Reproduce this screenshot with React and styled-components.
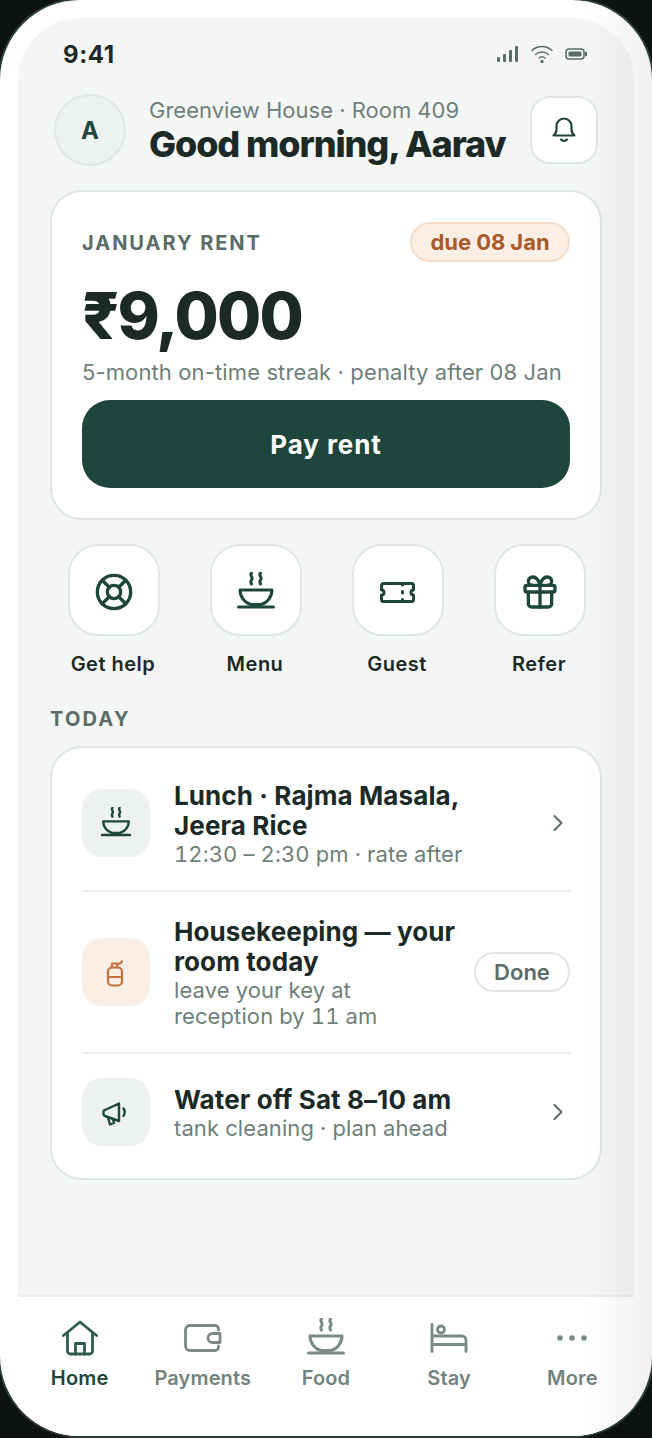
import styled, { createGlobalStyle } from "styled-components";
import { LifeBuoy, Gift, ChevronRight } from "lucide-react";

const Global = createGlobalStyle`
  html, body {
    margin: 0;
    padding: 0;
    background: #0c1311;
  }
  * {
    box-sizing: border-box;
  }
`;

const Page = styled.div`
  width: 652px;
  height: 1438px;
  background: #0c1311;
  font-family: "Inter", sans-serif;
  color: #1b2a26;
  overflow: hidden;
`;

const Phone = styled.div`
  position: relative;
  width: 652px;
  height: 1436px;
  padding: 18px 18px 0;
  background: #fff;
  border-radius: 80px;
  box-shadow: 0 0 0 2px #2a3d37;
  overflow: hidden;
  &::after {
    content: "";
    position: absolute;
    inset: 0;
    pointer-events: none;
    background: linear-gradient(to right, rgba(0, 0, 0, 0) 90%, rgba(0, 0, 0, 0.06) 100%);
  }
`;

const Screen = styled.div`
  height: 100%;
  display: flex;
  flex-direction: column;
  background: #f4f6f5;
  border-radius: 62px 62px 0 0;
  overflow: hidden;
`;

const Main = styled.main`
  flex: 1;
`;

const StatusBar = styled.div`
  display: flex;
  align-items: center;
  justify-content: space-between;
  height: 30px;
  margin-top: 21px;
  padding: 0 47px 0 45px;
  font-size: 24px;
  font-weight: 700;
  letter-spacing: 0.6px;
`;

const StatusIcons = styled.div`
  display: flex;
  align-items: center;
  gap: 12px;
  color: #5a6d67;
`;

const Header = styled.header`
  display: flex;
  align-items: center;
  margin-top: 25px;
  padding: 0 36px;
`;

const Avatar = styled.div`
  flex: none;
  width: 72px;
  height: 72px;
  display: flex;
  align-items: center;
  justify-content: center;
  border-radius: 50%;
  background: #edf1ef;
  border: 2px solid #dfe7e4;
  color: #1f463c;
  font-size: 24px;
  font-weight: 700;
`;

const Hello = styled.div`
  flex: 1;
  margin-left: 23px;
`;

const Place = styled.div`
  font-size: 22px;
  line-height: 28px;
  color: #6f7f7a;
`;

const Greeting = styled.h1`
  margin: 0;
  font-size: 36px;
  line-height: 40px;
  font-weight: 800;
  letter-spacing: -1.1px;
  white-space: nowrap;
`;

const BellButton = styled.div`
  flex: none;
  width: 68px;
  height: 68px;
  display: flex;
  align-items: center;
  justify-content: center;
  background: #fff;
  border: 2px solid #dfe7e4;
  border-radius: 20px;
  color: #1f463c;
`;

const Card = styled.section`
  margin: 0 32px;
  background: #fff;
  border: 2px solid #dfe7e4;
  border-radius: 32px;
`;

const RentCard = styled(Card)`
  margin-top: 24px;
  height: 330px;
  padding: 30px 30px 0;
`;

const RentTop = styled.div`
  display: flex;
  align-items: center;
  justify-content: space-between;
`;

const Eyebrow = styled.div`
  padding-top: 2px;
  font-size: 20px;
  font-weight: 700;
  letter-spacing: 1.95px;
  color: #5a6d67;
`;

const DueBadge = styled.div`
  width: 160px;
  height: 40px;
  display: flex;
  align-items: center;
  justify-content: center;
  background: #fbeee5;
  border: 2px solid #f3dcc9;
  border-radius: 20px;
  color: #a85a2a;
  font-size: 22px;
  font-weight: 700;
  letter-spacing: -0.05px;
`;

const Amount = styled.div`
  margin-top: 18px;
  font-size: 64px;
  line-height: 72px;
  font-weight: 800;
  letter-spacing: -1.9px;
`;

const RentNote = styled.div`
  margin-top: 6px;
  font-size: 22px;
  line-height: 28px;
  letter-spacing: 0.12px;
  color: #6f7f7a;
  white-space: nowrap;
`;

const PayButton = styled.div`
  margin-top: 14px;
  height: 88px;
  display: flex;
  align-items: center;
  justify-content: center;
  background: #1f463c;
  border-radius: 28px;
  color: #fff;
  font-size: 26px;
  font-weight: 700;
  letter-spacing: 0.9px;
`;

const Actions = styled.div`
  display: grid;
  grid-template-columns: repeat(4, 142px);
  margin-top: 24px;
  padding: 0 24px;
`;

const Action = styled.div`
  display: flex;
  flex-direction: column;
  align-items: center;
  gap: 16px;
`;

const ActionTile = styled.div`
  width: 92px;
  height: 92px;
  margin-left: 2px;
  padding-top: 4px;
  display: flex;
  align-items: center;
  justify-content: center;
  background: #fff;
  border: 2px solid #dfe7e4;
  border-radius: 30px;
  color: #1f463c;
`;

const ActionLabel = styled.div`
  font-size: 20px;
  line-height: 24px;
  font-weight: 600;
  letter-spacing: 0.5px;
`;

const SectionTitle = styled(Eyebrow)`
  margin: 29px 32px 15px;
  line-height: 24px;
  letter-spacing: 2.2px;
`;

const ListCard = styled(Card)`
  padding: 8px 30px;
`;

const Row = styled.div`
  display: flex;
  align-items: center;
  gap: 16px;
  padding: 24px 0;
  & + & {
    border-top: 2px solid #e9edeb;
  }
`;

const RowIcon = styled.div`
  flex: none;
  width: 68px;
  height: 68px;
  margin-right: 8px;
  display: flex;
  align-items: center;
  justify-content: center;
  border-radius: 20px;
  background: ${(props) => (props.$warm ? "#fbeee5" : "#edf1ef")};
  color: ${(props) => (props.$warm ? "#c5713c" : "#1f463c")};
`;

const RowText = styled.div`
  flex: 1;
  min-width: 0;
  transform: translateY(1px);
`;

const RowTitle = styled.div`
  font-size: 26px;
  line-height: 30px;
  font-weight: 700;
  letter-spacing: 0.1px;
`;

const RowSub = styled.div`
  font-size: 22px;
  line-height: 26px;
  letter-spacing: 0.1px;
  font-variant-numeric: tabular-nums;
  color: #6f7f7a;
`;

const Chevron = styled.div`
  flex: none;
  display: flex;
  margin-right: -2px;
  color: #5a6d67;
`;

const DoneButton = styled.div`
  flex: none;
  width: 96px;
  height: 40px;
  display: flex;
  align-items: center;
  justify-content: center;
  background: #fff;
  border: 2px solid #dfe7e4;
  border-radius: 20px;
  color: #5a6d67;
  font-size: 22px;
  font-weight: 600;
`;

const Nav = styled.nav`
  flex: none;
  height: 141px;
  padding-top: 21px;
  display: grid;
  grid-template-columns: repeat(5, 1fr);
  background: #fff;
  border-top: 2px solid #e9edeb;
`;

const NavItem = styled.div`
  display: flex;
  flex-direction: column;
  align-items: center;
  color: ${(props) => (props.$active ? "#1f463c" : "#72837e")};
`;

const NavIcon = styled.div`
  height: 40px;
  display: flex;
  align-items: center;
  justify-content: center;
  color: ${(props) => (props.$active ? "#2f5a4e" : "#7a8a85")};
`;

const NavLabel = styled.div`
  margin-top: 8px;
  font-size: 20px;
  line-height: 24px;
  font-weight: 600;
  letter-spacing: 0.15px;
`;

const SignalIcon = () => (
  <svg width="22" height="16" viewBox="0 0 22 16" fill="currentColor">
    <rect x="0" y="11" width="3" height="5" rx="1.2" />
    <rect x="6" y="8" width="3" height="8" rx="1" />
    <rect x="12" y="4" width="3" height="12" rx="1" />
    <rect x="18" y="0" width="3" height="16" rx="1" />
  </svg>
);

const WifiIcon = () => (
  <svg width="22" height="18" viewBox="0 0 22 18" fill="none" stroke="currentColor" strokeWidth="1.4" strokeLinecap="round">
    <path d="M1 5.500a14.500 14.500 0 0 1 20 0" />
    <path d="M4.500 9.500a9.500 9.500 0 0 1 13 0" />
    <path d="M8 13a4.500 4.500 0 0 1 6 0" />
    <circle cx="11" cy="16.400" r="1" fill="currentColor" />
  </svg>
);

const BatteryIcon = () => (
  <svg width="22" height="12" viewBox="0 0 22 12" fill="none">
    <rect x="1" y="1" width="18" height="10" rx="3" stroke="currentColor" strokeWidth="1.600" />
    <rect x="3.500" y="3.500" width="13" height="5" rx="1" fill="currentColor" />
    <path d="M20.500 4v4a2 2 0 0 0 0-4Z" fill="currentColor" stroke="currentColor" />
  </svg>
);

const BellIcon = () => (
  <svg width="24" height="26" viewBox="0 0 24 26" fill="none" stroke="currentColor" strokeWidth="2.200" strokeLinecap="round" strokeLinejoin="round">
    <path d="M1.500 18.500h21c-2-1.600-3-3-3-6V9a7.500 7.500 0 0 0-15 0v3.500c0 3-1 4.400-3 6Z" />
    <path d="M9 22.500c1.600 1.800 4.400 1.800 6 0" />
  </svg>
);

const BowlIcon = ({ size = 40, width = 3 }) => (
  <svg width={size} height={size} viewBox="0 2 40 40" fill="none" stroke="currentColor" strokeWidth={width} strokeLinecap="round" strokeLinejoin="round">
    <path d="M15.500 3c-2.400 2.400 2.400 4.400 0 7-1 1.200-1 2 0 4" />
    <path d="M24.500 3c-2.400 2.400 2.400 4.400 0 7-1 1.200-1 2 0 4" />
    <path d="M4 20h32c0 7-5 13-11 14.500H15C9 33 4 27 4 20Z" />
    <path d="M2.500 37h35" />
  </svg>
);

const TicketIcon = () => (
  <svg width="40" height="40" viewBox="0 0 40 40" fill="none" stroke="currentColor" strokeWidth="3" strokeLinecap="round" strokeLinejoin="round">
    <path d="M3.500 13.500a2 2 0 0 1 2-2h28a2 2 0 0 1 2 2v4.500a2.500 2.500 0 0 0 0 5v4.500a2 2 0 0 1-2 2h-28a2 2 0 0 1-2-2V23a2.500 2.500 0 0 0 0-5Z" />
    <path d="M24.500 12v1M24.500 19.500v1.500M24.500 27.500v1" />
  </svg>
);

const SprayIcon = () => (
  <svg width="30" height="30" viewBox="0 0 30 30" fill="none" stroke="currentColor" strokeWidth="2.200" strokeLinecap="round" strokeLinejoin="round">
    <rect x="7" y="10.500" width="14" height="18" rx="4" />
    <path d="M7 20h14" />
    <path d="M11 10.500V6.500h5v4" />
    <path d="M16 7c2.500 0 4-.5 5-2.500" />
  </svg>
);

const MegaphoneIcon = () => (
  <svg width="28" height="28" viewBox="0 0 28 28" fill="none" stroke="currentColor" strokeWidth="2.400" strokeLinecap="round" strokeLinejoin="round">
    <path d="M17 5.500 3 12a2 2 0 0 0-1.500 2v2A2 2 0 0 0 3 18l14 5Z" />
    <path d="M6 19.500l2 7 4-1.500-1-3.500" />
    <path d="M21.500 10.500c1.500 2 1.500 5 0 7.500" />
  </svg>
);

const HomeIcon = () => (
  <svg width="36" height="36" viewBox="0 0 36 36" fill="none" stroke="currentColor" strokeWidth="2.800" strokeLinecap="round" strokeLinejoin="round">
    <path d="M1.500 15.500 18 2l16.500 13.500" />
    <path d="M5.500 13v18a3 3 0 0 0 3 3h19a3 3 0 0 0 3-3V13" />
    <path d="M13.500 34V23.500h9V34" />
  </svg>
);

const WalletIcon = () => (
  <svg width="38" height="28" viewBox="0 0 38 28" fill="none" stroke="currentColor" strokeWidth="2.800" strokeLinecap="round" strokeLinejoin="round">
    <path d="M34.500 6V5a3.500 3.500 0 0 0-3.500-3.500H6A4.500 4.500 0 0 0 1.500 6v16A4.500 4.500 0 0 0 6 26.500h25a3.500 3.500 0 0 0 3.500-3.500v-1" />
    <path d="M36 9.500h-7.500a4.500 4.500 0 0 0 0 9H36Z" />
  </svg>
);

const BedIcon = () => (
  <svg width="38" height="30" viewBox="0 0 38 30" fill="none" stroke="currentColor" strokeWidth="2.800" strokeLinecap="round" strokeLinejoin="round">
    <path d="M2 1.500V28.500" />
    <path d="M2 21.500h34" />
    <path d="M2 13h30a4 4 0 0 1 4 4v11.500" />
    <circle cx="11" cy="6.500" r="3.500" />
  </svg>
);

const DotsIcon = () => (
  <svg width="32" height="8" viewBox="0 0 32 8" fill="currentColor">
    <circle cx="4" cy="4" r="2.800" />
    <circle cx="16" cy="4" r="2.800" />
    <circle cx="28" cy="4" r="2.800" />
  </svg>
);

const actions = [
  { label: "Get help", icon: <LifeBuoy size={40} strokeWidth={2} /> },
  { label: "Menu", icon: <BowlIcon /> },
  { label: "Guest", icon: <TicketIcon /> },
  { label: "Refer", icon: <Gift size={40} strokeWidth={2} /> },
];

const navItems = [
  { label: "Home", icon: <HomeIcon />, active: true },
  { label: "Payments", icon: <WalletIcon /> },
  { label: "Food", icon: <BowlIcon /> },
  { label: "Stay", icon: <BedIcon /> },
  { label: "More", icon: <DotsIcon /> },
];

const App = () => {
  return (
    <Page>
      <Global />
      <Phone>
        <Screen>
          <Main>
            <StatusBar>
              <span>9:41</span>
              <StatusIcons>
                <SignalIcon />
                <WifiIcon />
                <BatteryIcon />
              </StatusIcons>
            </StatusBar>
            <Header>
              <Avatar>A</Avatar>
              <Hello>
                <Place>Greenview House · Room 409</Place>
                <Greeting>Good morning, Aarav</Greeting>
              </Hello>
              <BellButton>
                <BellIcon />
              </BellButton>
            </Header>
            <RentCard>
              <RentTop>
                <Eyebrow>JANUARY RENT</Eyebrow>
                <DueBadge>due 08 Jan</DueBadge>
              </RentTop>
              <Amount>₹9,000</Amount>
              <RentNote>5-month on-time streak · penalty after 08 Jan</RentNote>
              <PayButton>Pay rent</PayButton>
            </RentCard>
            <Actions>
              {actions.map((a) => (
                <Action key={a.label}>
                  <ActionTile>{a.icon}</ActionTile>
                  <ActionLabel>{a.label}</ActionLabel>
                </Action>
              ))}
            </Actions>
            <SectionTitle>TODAY</SectionTitle>
            <ListCard>
              <Row>
                <RowIcon>
                  <BowlIcon size={32} width={3} />
                </RowIcon>
                <RowText>
                  <RowTitle>Lunch · Rajma Masala, Jeera Rice</RowTitle>
                  <RowSub>12:30 – 2:30 pm · rate after</RowSub>
                </RowText>
                <Chevron>
                  <ChevronRight size={28} strokeWidth={1.8} />
                </Chevron>
              </Row>
              <Row>
                <RowIcon $warm>
                  <SprayIcon />
                </RowIcon>
                <RowText>
                  <RowTitle>Housekeeping — your room today</RowTitle>
                  <RowSub>
                    leave your key at
                    <br />
                    reception by 11 am
                  </RowSub>
                </RowText>
                <DoneButton>Done</DoneButton>
              </Row>
              <Row>
                <RowIcon>
                  <MegaphoneIcon />
                </RowIcon>
                <RowText>
                  <RowTitle>Water off Sat 8–10 am</RowTitle>
                  <RowSub>tank cleaning · plan ahead</RowSub>
                </RowText>
                <Chevron>
                  <ChevronRight size={28} strokeWidth={1.8} />
                </Chevron>
              </Row>
            </ListCard>
          </Main>
          <Nav>
            {navItems.map((n) => (
              <NavItem key={n.label} $active={n.active}>
                <NavIcon $active={n.active}>{n.icon}</NavIcon>
                <NavLabel>{n.label}</NavLabel>
              </NavItem>
            ))}
          </Nav>
        </Screen>
      </Phone>
    </Page>
  );
};

export default App;
